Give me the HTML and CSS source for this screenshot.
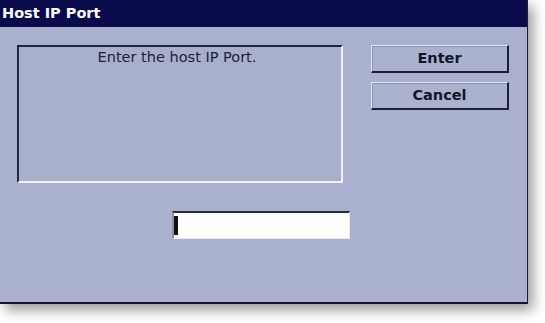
FILE: index.html
```html
<!DOCTYPE html>
<html>
<head>
<meta charset="utf-8">
<link rel="stylesheet" href="styles.css">
</head>
<body>
<div class="window">
  <div class="titlebar">Host IP Port</div>
  <div class="content">
    <div class="top-row">
      <div class="panel"><div class="prompt">Enter the host IP Port.</div></div>
      <div class="buttons">
        <div class="btn">Enter</div>
        <div class="btn">Cancel</div>
      </div>
    </div>
    <div class="input-row">
      <div class="field"><span class="caret"></span></div>
    </div>
  </div>
</div>
</body>
</html>
```

FILE: styles.css
```css
html, body {
  margin: 0;
  padding: 0;
  background: #ffffff;
}
body {
  width: 545px;
  height: 323px;
  overflow: hidden;
  font-family: "DejaVu Sans", Verdana, sans-serif;
}
.window {
  width: 528px;
  height: 304px;
  background: #aab1ce;
  border-right: 1px solid #1a1c34;
  border-bottom: 2px solid #15172c;
  box-sizing: border-box;
  box-shadow: 5px 6px 12px rgba(0, 0, 0, 0.4);
  display: flex;
  flex-direction: column;
}
.titlebar {
  height: 27px;
  background: #0a0b4a;
  color: #ffffff;
  font-weight: bold;
  font-size: 14.5px;
  line-height: 27px;
  padding-left: 2px;
  box-sizing: border-box;
}
.content {
  padding: 18px 0 0 17px;
}
.top-row {
  display: flex;
  align-items: flex-start;
  gap: 28px;
}
.panel {
  width: 326px;
  height: 138px;
  box-sizing: border-box;
  border-top: 2px solid #22264a;
  border-left: 2px solid #22264a;
  border-bottom: 2px solid #f2f3f8;
  border-right: 2px solid #f2f3f8;
  background: #a8afcb;
}
.prompt {
  text-align: center;
  font-size: 14.5px;
  color: #1c1f33;
  padding-top: 1px;
  line-height: 18px;
  padding-right: 6px;
}
.buttons {
  display: flex;
  flex-direction: column;
  gap: 9px;
}
.btn {
  width: 138px;
  height: 28px;
  box-sizing: border-box;
  border-top: 1px solid #e2e5f0;
  border-left: 1px solid #e2e5f0;
  border-right: 2px solid #1c1f36;
  border-bottom: 2px solid #1c1f36;
  box-shadow: inset 1px 1px 0 #8e95b2;
  background: #abb2ce;
  color: #141628;
  font-weight: bold;
  font-size: 14.5px;
  text-align: center;
  line-height: 24px;
}
.input-row {
  margin-top: 28px;
  padding-left: 155px;
}
.field {
  width: 178px;
  height: 28px;
  box-sizing: border-box;
  background: #fdfdfb;
  border-top: 2px solid #26283e;
  border-left: 2px solid #8a90a8;
  border-bottom: 1px solid #e8eaf2;
  border-right: 1px solid #e8eaf2;
  display: flex;
  align-items: center;
}
.caret {
  display: block;
  width: 4px;
  height: 19px;
  background: #1a0d10;
}
```
